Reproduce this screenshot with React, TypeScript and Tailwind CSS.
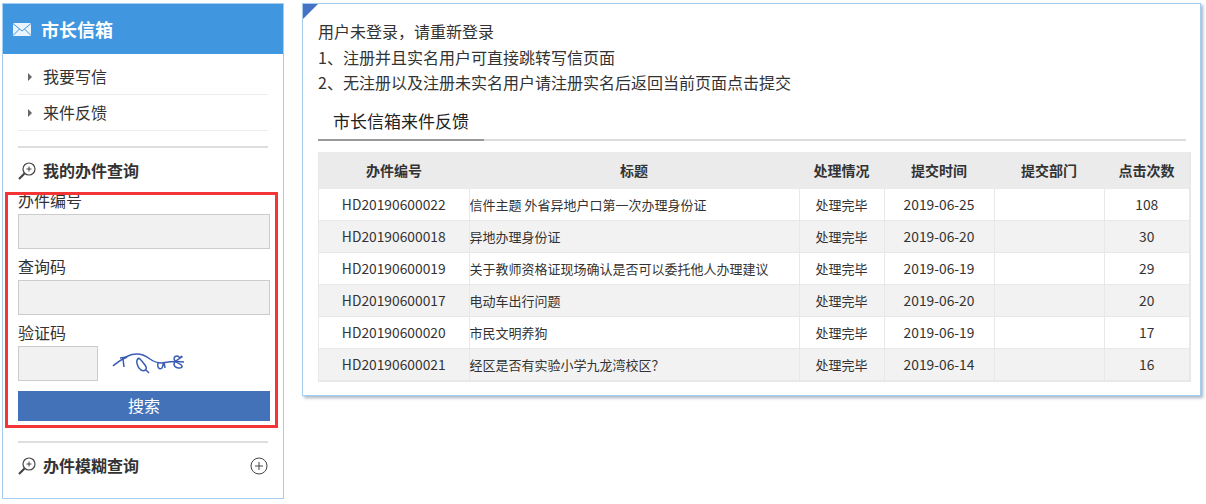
const font = "font-['Microsoft_YaHei','Noto_Sans_CJK_SC',sans-serif]";

const rows = [
  ["HD20190600022", "信件主题 外省异地户口第一次办理身份证", "2019-06-25", "108"],
  ["HD20190600018", "异地办理身份证", "2019-06-20", "30"],
  ["HD20190600019", "关于教师资格证现场确认是否可以委托他人办理建议", "2019-06-19", "29"],
  ["HD20190600017", "电动车出行问题", "2019-06-20", "20"],
  ["HD20190600020", "市民文明养狗", "2019-06-19", "17"],
  ["HD20190600021", "经区是否有实验小学九龙湾校区\uFF1F", "2019-06-14", "16"],
];

function SearchIcon() {
  return (
    <svg width="18" height="18" viewBox="0 0 18 18" fill="none" stroke="#444" className="shrink-0">
      <circle cx="11" cy="7" r="6" strokeWidth="1.2" />
      <path d="M8.5 7h5M11 4.5v5" strokeWidth="1" />
      <path d="M6.5 11.5 1 17" strokeWidth="2.2" />
    </svg>
  );
}

function Field({ label }: { label: string }) {
  return (
    <div className="flex flex-col">
      <label className="h-[25px] text-[16px] leading-[23px]">{label}</label>
      <input className="h-[35px] w-full border border-[#cccccc] bg-[#f1f1f1]" />
    </div>
  );
}

export default function App() {
  return (
    <div className={`${font} flex h-[504px] w-[1206px] items-start gap-[18px] bg-white pl-[2px] pt-[3px] text-[#333]`}>
      <aside className="relative h-[496px] w-[282px] shrink-0 border border-[#a5cdf0]">
        <div className="flex h-[50px] items-center gap-[10px] bg-[#4196e0] pl-[10px] text-white">
          <svg width="18" height="13" viewBox="0 0 18 13" className="shrink-0">
            <rect width="18" height="13" fill="#eaf4fd" />
            <path d="M0 0.5 9 8 18 0.5M0 12.5 6.5 6M18 12.5 11.5 6" fill="none" stroke="#4196e0" strokeWidth="1" />
          </svg>
          <span className="text-[18px] font-bold">市长信箱</span>
        </div>
        <ul className="mx-[15px] mt-[5px] w-[250px]">
          {["我要写信", "来件反馈"].map((t) => (
            <li key={t} className="flex h-[36px] items-center gap-[11px] border-b border-[#ececec] pl-[10px] text-[16px]">
              <span className="h-0 w-0 border-y-[4px] border-l-[4px] border-y-transparent border-l-[#666]" />
              <span className="pb-[2px]">{t}</span>
            </li>
          ))}
        </ul>
        <div className="mx-[15px] mt-[15px] border-t-2 border-[#dedede]" />
        <div className="mx-[15px] mt-[14px] flex h-[18px] items-center gap-[7px] text-[16px] font-bold">
          <SearchIcon />
          <span className="pb-[2px]">我的办件查询</span>
        </div>
        <div className="mx-[15px] mt-[9px] w-[252px]">
          <Field label="办件编号" />
          <div className="mt-[6px]">
            <Field label="查询码" />
          </div>
          <div className="mt-[6px] h-[25px] text-[16px] leading-[23px]">验证码</div>
          <div className="flex h-[35px] items-center gap-[14px]">
            <input className="h-[35px] w-[80px] border border-[#cccccc] bg-[#f1f1f1]" />
            <svg width="74" height="27" viewBox="0 0 74 27" fill="none" stroke="#3b5cb4" strokeWidth="1.5">
              <path d="M1 16 C6 12 12 7 20 4.5 C27 3 33 5 38 9 C42 12 46 13 50 13 C56 12 64 11 72 12" />
              <path d="M8 8 L15 7 L11 9 L12 17" />
              <path d="M27 8 C23 10 25 17 29 20 C33 22 36 19 33 15 C31 12 29 10 27 8 M33 19 L37 23" />
              <path d="M46 13 C45 17 47 20 50 18 L52 12 L53 18" />
              <path d="M68 8 C65 4 60 7 63 11 C66 14 71 14 70 17 C68 19 62 18 62 14 C62 11 67 9 70 7 C70 6 69 6 68 8" />
            </svg>
          </div>
          <button className="mt-[10px] h-[30px] w-full bg-[#4472b9] pb-[2px] text-[16px] text-white">搜索</button>
        </div>
        <div className="mx-[15px] mt-[20px] border-t-2 border-[#dedede]" />
        <div className="mx-[15px] mt-[14px] flex h-[18px] w-[250px] items-center gap-[7px] text-[16px] font-bold">
          <SearchIcon />
          <span className="pb-[2px]">办件模糊查询</span>
          <svg width="18" height="18" viewBox="0 0 18 18" fill="none" stroke="#444" className="ml-auto">
            <circle cx="9" cy="9" r="8" />
            <path d="M5 9h8M9 5v8" />
          </svg>
        </div>
        {/* red highlight drawn over the form */}
        <div className="absolute left-[2px] top-[188px] h-[236px] w-[273px] border-[3px] border-[#f33535]" />
      </aside>

      <main className="relative h-[393px] w-[899px] shrink-0 border border-[#a5cdf0] pl-[15px] pr-[14px] pt-[15px] shadow-[2px_2px_3px_rgba(110,130,150,0.6)]">
        <div className="absolute left-0 top-0 h-0 w-0 border-r-[15px] border-t-[15px] border-r-transparent border-t-[#4472c4]" />
        <div className="text-[16px] leading-[25.5px]">
          <p>{"用户未登录\uFF0C请重新登录"}</p>
          <p>1、注册并且实名用户可直接跳转写信页面</p>
          <p>2、无注册以及注册未实名用户请注册实名后返回当前页面点击提交</p>
        </div>
        <div className="mt-[11px] border-b-2 border-[#dddddd]">
          <div className="-mb-[2px] w-[166px] border-b-2 border-[#999] pb-[5px] pl-[15px] text-[17px] leading-[27px] text-[#222]">
            市长信箱来件反馈
          </div>
        </div>
        <div className="mt-[11px] w-[873px] border-b border-l border-r-2 border-[#e8e8e8]">
          <table className="w-full table-fixed border-collapse text-center text-[13px]">
            <colgroup>
              <col className="w-[150px]" />
              <col className="w-[330px]" />
              <col className="w-[85px]" />
              <col className="w-[110px]" />
              <col className="w-[110px]" />
              <col className="w-[85px]" />
            </colgroup>
            <thead>
              <tr className="h-[37px] bg-[#ebebeb] text-[14px] font-bold">
                {["办件编号", "标题", "处理情况", "提交时间", "提交部门", "点击次数"].map((h) => (
                  <th key={h} className="p-0">{h}</th>
                ))}
              </tr>
            </thead>
            <tbody>
              {rows.map((r, i) => (
                <tr key={r[0]} className={`h-[32px] ${i % 2 ? "bg-[#f2f2f2]" : "bg-white"}`}>
                  <td className="border-b border-[#e8e8e8] p-0 text-[13.8px]">{r[0]}</td>
                  <td className="truncate border-b border-l border-[#e8e8e8] p-0 text-left">{r[1]}</td>
                  <td className="border-b border-l border-[#e8e8e8] p-0">处理完毕</td>
                  <td className="border-b border-l border-[#e8e8e8] p-0 text-[13.8px]">{r[2]}</td>
                  <td className="border-b border-l border-[#e8e8e8] p-0" />
                  <td className="border-b border-l border-[#e8e8e8] p-0 text-[13.8px]">{r[3]}</td>
                </tr>
              ))}
            </tbody>
          </table>
        </div>
      </main>
    </div>
  );
}
